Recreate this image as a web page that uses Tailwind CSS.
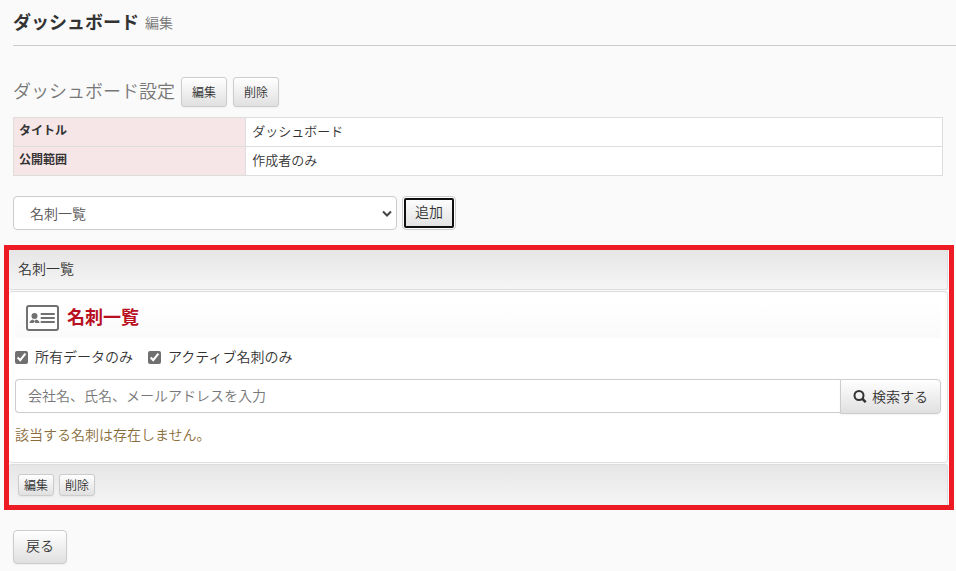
<!DOCTYPE html>
<html lang="ja">
  <head>
    <meta charset="UTF-8" />
    <meta name="viewport" content="width=device-width, initial-scale=1.0" />
    <title>ダッシュボード 編集</title>
    <script src="https://cdn.jsdelivr.net/npm/@tailwindcss/browser@4"></script>
  </head>
  <body class="min-h-screen bg-[#fafafa] pb-2 font-['Noto_Sans_CJK_JP',sans-serif] text-sm font-[350] text-[#333]">
    <header class="ml-[13px] flex h-[46px] items-center gap-1.5 border-b border-[#ccc] pb-1">
      <h1 class="text-lg font-bold">ダッシュボード</h1>
      <small class="pt-0.5 text-sm text-[#777]">編集</small>
    </header>

    <main>
      <section class="mx-[13px] mt-[31px]">
        <div class="flex items-center gap-1.5">
          <h2 class="pb-1 text-lg leading-6 font-[350] text-[#777]">ダッシュボード設定</h2>
          <button type="button" class="h-[30px] rounded-[3px] border border-[#ccc] bg-linear-to-b from-white to-[#e0e0e0] px-2.5 text-xs shadow-xs">編集</button>
          <button type="button" class="h-[30px] rounded-[3px] border border-[#ccc] bg-linear-to-b from-white to-[#e0e0e0] px-2.5 text-xs shadow-xs">削除</button>
        </div>

        <table class="mt-2.5 w-full table-fixed border-collapse bg-white text-left">
          <tr class="h-[29px]">
            <th class="w-1/4 border border-[#ddd] bg-[#f7e6e7] px-[5px] pb-1 text-xs font-bold">タイトル</th>
            <td class="border border-[#ddd] px-1.5 pb-0.5 text-[13px] leading-5">ダッシュボード</td>
          </tr>
          <tr class="h-[29px]">
            <th class="border border-[#ddd] bg-[#f7e6e7] px-[5px] pb-1 text-xs font-bold">公開範囲</th>
            <td class="border border-[#ddd] px-1.5 pb-0.5 text-[13px] leading-5">作成者のみ</td>
          </tr>
        </table>

        <form class="mt-5 flex gap-[5px]">
          <div class="relative w-96">
            <select aria-label="追加するパーツ" class="h-[34px] w-full appearance-none rounded border border-[#ccc] bg-white px-4 text-sm text-[#555]">
              <option>名刺一覧</option>
            </select>
            <svg class="pointer-events-none absolute top-3.5 right-1 h-2 w-3" viewBox="0 0 12 8" fill="none" stroke="#444" stroke-width="2">
              <path d="M2 1.5l4 4 4-4" />
            </svg>
          </div>
          <button type="button" class="h-[34px] rounded border border-[#ccc] bg-linear-to-b from-white to-[#e0e0e0] px-3 pb-1 text-sm inset-shadow-[0_0_0_2px_#fff] outline-2 -outline-offset-4 outline-[#101010]">追加</button>
        </form>
      </section>

      <section class="mt-[15px] mr-0.5 ml-1 border-5 border-[#ed1c24] pr-px">
        <div class="flex h-10 items-center rounded-b-[3px] border-r border-b border-[#ddd] bg-linear-to-b from-[#e6e6e6] to-[#f5f5f5] px-[9px] pb-1">名刺一覧</div>

        <div class="mt-px rounded border-y border-r border-[#ddd] bg-white px-1.5 pt-2.5 pb-[18px]">
          <div class="flex h-9 items-start gap-2 bg-linear-to-b from-white to-[#fafafa] pl-[11px]">
            <svg class="mt-[3px] h-[26px] w-[33px]" viewBox="0 0 33 26">
              <rect x="1" y="1" width="31" height="24" rx="2" fill="#fff" stroke="#717171" stroke-width="2" />
              <circle cx="8.5" cy="11" r="3" fill="#717171" />
              <path d="M3.500 18c0-2 1.500-3 3.500-3.500l1.500 1.500 1.500-1.500c2 .5 3.500 1.500 3.500 3.500h-4l-1-1.500-1 1.500z" fill="#717171" />
              <path d="M15.500 9h12.500M15.500 13h12.500M15.500 17h12.500" stroke="#717171" stroke-width="2" stroke-linecap="round" />
            </svg>
            <h3 class="text-lg leading-7 font-bold text-[#b8101f]">名刺一覧</h3>
          </div>

          <div class="mt-2 flex h-5 items-center gap-[15px]">
            <label class="flex items-center gap-[7px]">
              <input type="checkbox" checked class="mt-0.5 size-[13px] accent-[#707070]" />所有データのみ
            </label>
            <label class="flex items-center gap-[7px]">
              <input type="checkbox" checked class="mt-0.5 size-[13px] accent-[#707070]" />アクティブ名刺のみ
            </label>
          </div>

          <form class="mt-[13px] flex">
            <input type="text" aria-label="検索キーワード" placeholder="会社名、氏名、メールアドレスを入力" class="h-[34px] min-w-0 flex-1 rounded-l border border-r-0 border-[#ccc] bg-white px-3 pb-0.5 text-sm placeholder:text-[#777]" />
            <button type="button" class="flex h-[35px] items-center gap-[5px] rounded-r border border-[#ccc] bg-linear-to-b from-white to-[#e0e0e0] px-3 pb-0.5 text-sm shadow-xs">
              <svg class="size-3.5" viewBox="0 0 14 14" fill="none" stroke="#333" stroke-width="2">
                <circle cx="6" cy="6.500" r="4.500" />
                <path d="M9.200 9.700l3.500 3.500" stroke-width="2.500" />
              </svg>
              検索する
            </button>
          </form>

          <p class="mt-2.5 leading-5 text-[#8a6d3b]">該当する名刺は存在しません。</p>
        </div>

        <div class="mt-px flex h-[41px] items-center gap-[5px] rounded-t-[3px] border-t border-r border-[#ddd] bg-linear-to-b from-[#e6e6e6] to-[#f5f5f5] px-[9px]">
          <button type="button" class="h-[22px] rounded-[3px] border border-[#ccc] bg-linear-to-b from-white to-[#e0e0e0] px-[5px] text-xs shadow-xs">編集</button>
          <button type="button" class="h-[22px] rounded-[3px] border border-[#ccc] bg-linear-to-b from-white to-[#e0e0e0] px-[5px] text-xs shadow-xs">削除</button>
        </div>
      </section>

      <button type="button" class="mt-5 ml-[13px] h-[34px] rounded border border-[#ccc] bg-linear-to-b from-white to-[#e0e0e0] px-3 pb-1 text-sm shadow-xs">戻る</button>
    </main>
  </body>
</html>
